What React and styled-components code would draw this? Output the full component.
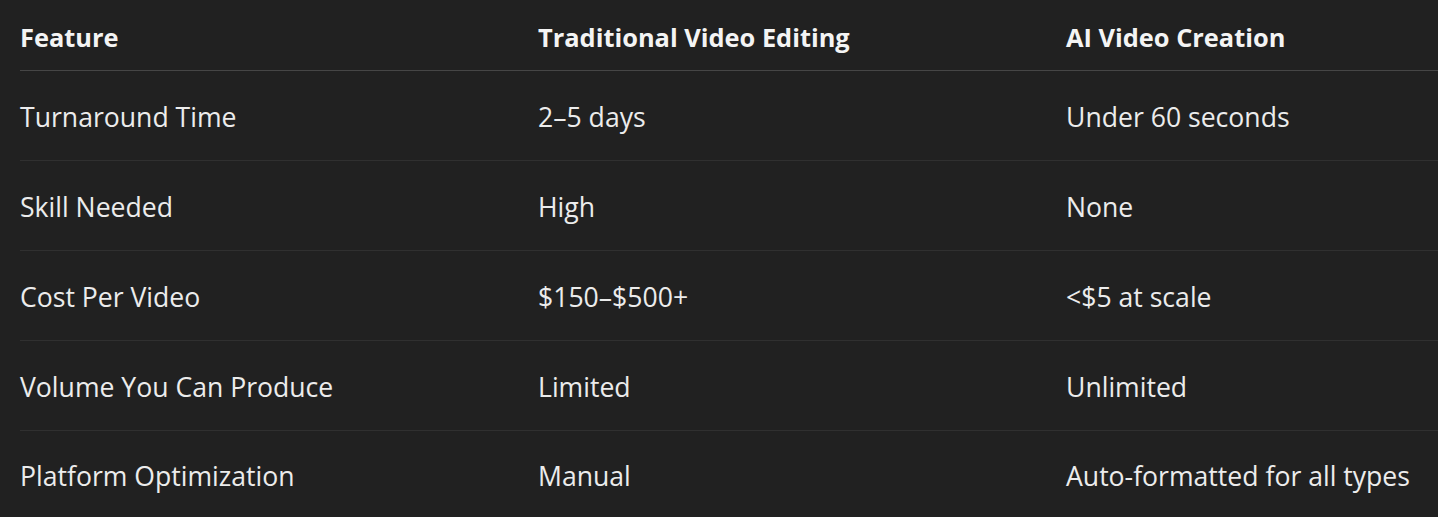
import styled, { createGlobalStyle } from "styled-components";

const Global = createGlobalStyle`
  html, body {
    margin: 0;
    padding: 0;
    background: #212121;
  }
  body {
    font-family: "Open Sans", "Noto Sans", "Liberation Sans", sans-serif;
    color: #ececec;
    overflow: hidden;
  }
`;

const Wrap = styled.div`
  padding-left: 20px;
  width: 1418px;
`;

const Table = styled.div`
  display: grid;
  grid-template-columns: 518px 528px 1fr;
`;

const HeadCell = styled.div`
  height: 71px;
  padding-top: 4px;
  box-sizing: border-box;
  display: flex;
  align-items: center;
  font-size: 25.4px;
  font-weight: 700;
  color: #f4f4f4;
  border-bottom: 1px solid #464646;
  white-space: nowrap;
`;

const Cell = styled.div`
  height: ${(p) => (p.$last ? "86px" : "90px")};
  box-sizing: border-box;
  display: flex;
  align-items: center;
  padding-top: ${(p) => (p.$last ? "4px" : "2px")};
  font-size: 26.6px;
  font-weight: 400;
  color: #ececec;
  border-bottom: ${(p) => (p.$last ? "none" : "1px solid #303030")};
  white-space: nowrap;
`;

const headers = ["Feature", "Traditional Video Editing", "AI Video Creation"];

const rows = [
  ["Turnaround Time", "2–5 days", "Under 60 seconds"],
  ["Skill Needed", "High", "None"],
  ["Cost Per Video", "$150–$500+", "<$5 at scale"],
  ["Volume You Can Produce", "Limited", "Unlimited"],
  ["Platform Optimization", "Manual", "Auto-formatted for all types"],
];

export default function App() {
  return (
    <>
      <Global />
      <Wrap>
        <Table>
          {headers.map((h) => (
            <HeadCell key={h}>{h}</HeadCell>
          ))}
          {rows.map((row, i) =>
            row.map((c, j) => (
              <Cell key={`${i}-${j}`} $last={i === rows.length - 1}>
                {c}
              </Cell>
            ))
          )}
        </Table>
      </Wrap>
    </>
  );
}
